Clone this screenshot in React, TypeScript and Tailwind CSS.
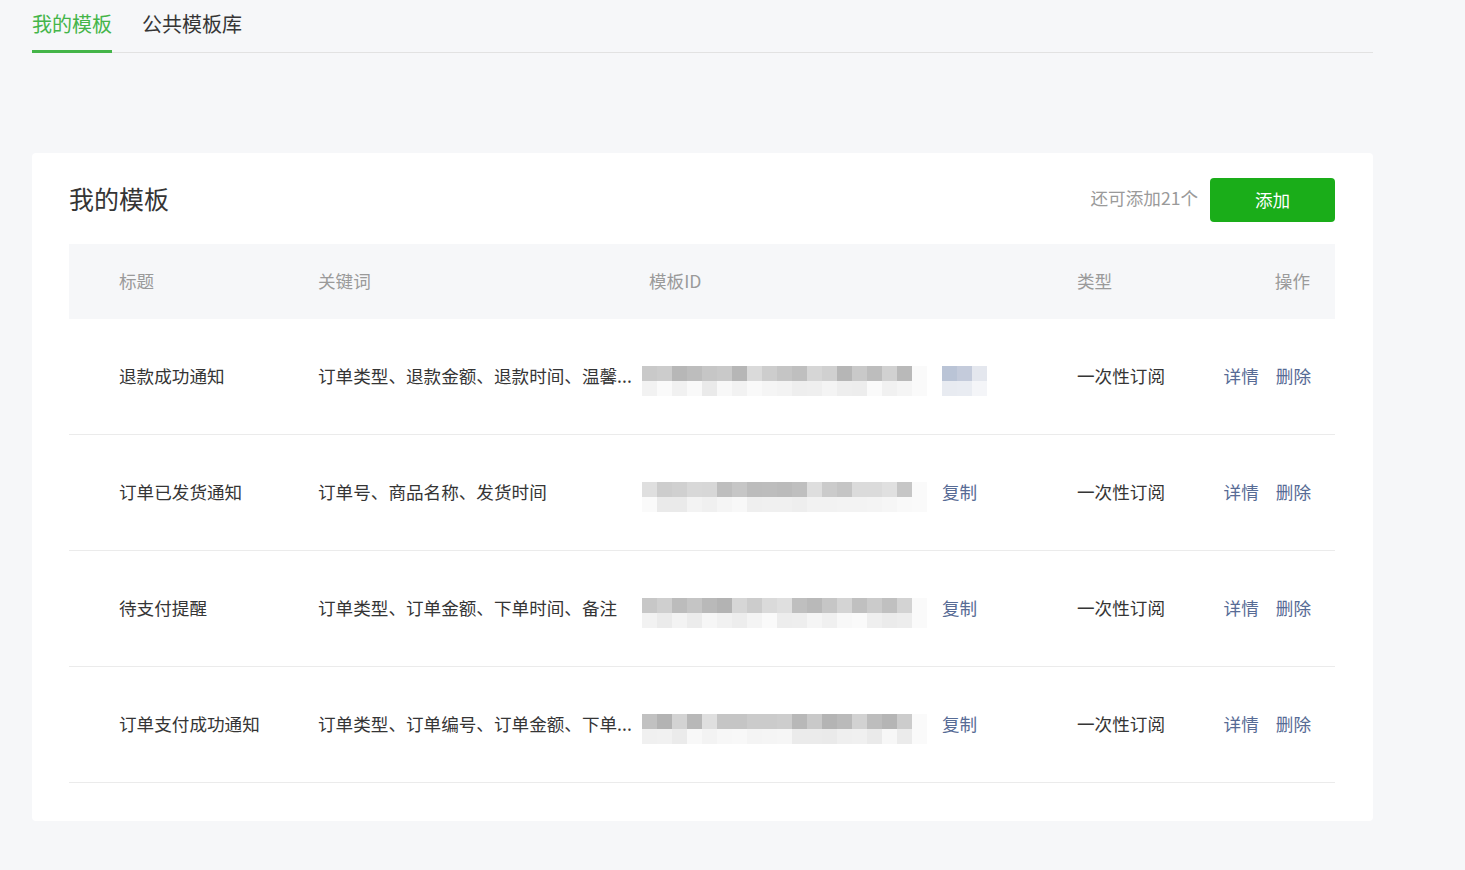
import React from 'react';

type Row = {
  title: string;
  keywords: string;
  seed: number;
  copied: boolean;
};

const rows: Row[] = [
  { title: '退款成功通知', keywords: '订单类型、退款金额、退款时间、温馨...', seed: 7, copied: false },
  { title: '订单已发货通知', keywords: '订单号、商品名称、发货时间', seed: 19, copied: true },
  { title: '待支付提醒', keywords: '订单类型、订单金额、下单时间、备注', seed: 31, copied: true },
  { title: '订单支付成功通知', keywords: '订单类型、订单编号、订单金额、下单...', seed: 53, copied: true },
];

// simple seeded random, so the blurred id looks the same every render
function randoms(seed: number, n: number) {
  let s = seed;
  const out: number[] = [];
  for (let i = 0; i < n; i++) {
    s = (s * 9301 + 49297) % 233280;
    out.push(s / 233280);
  }
  return out;
}

function gray(v: number) {
  const h = Math.round(v).toString(16).padStart(2, '0');
  return `#${h}${h}${h}`;
}

// mosaic that stands in for the masked template id
function BlurredId({ seed, withBlue }: { seed: number; withBlue: boolean }) {
  const cols = 18;
  const top = randoms(seed, cols);
  const bottom = randoms(seed + 101, cols);
  return (
    <svg width={withBlue ? 345 : 285} height={30} className="mt-[8px] shrink-0">
      {top.map((r, i) => (
        <rect key={'t' + i} x={i * 15} y={0} width={15} height={15} fill={gray(178 + r * 46)} />
      ))}
      {bottom.map((r, i) => (
        <rect key={'b' + i} x={i * 15} y={15} width={15} height={15} fill={gray(234 + r * 16)} />
      ))}
      <rect x={270} y={0} width={15} height={30} fill="#fafafa" />
      {withBlue && (
        <g>
          <rect x={300} y={0} width={15} height={15} fill="#bac4d6" />
          <rect x={315} y={0} width={15} height={15} fill="#c4cbdb" />
          <rect x={330} y={0} width={15} height={15} fill="#e4e7ee" />
          <rect x={300} y={15} width={15} height={15} fill="#e8ebf1" />
          <rect x={315} y={15} width={15} height={15} fill="#e9ecf2" />
          <rect x={330} y={15} width={15} height={15} fill="#f4f5f8" />
        </g>
      )}
    </svg>
  );
}

export default function App() {
  const [tab, setTab] = React.useState<'mine' | 'public'>('mine');

  return (
    <div className="min-h-screen bg-[#f6f7f9] font-['Noto_Sans_CJK_SC',sans-serif] text-[#353535]">
      <div className="pl-[32px] w-[1373px]">
        {/* tabs */}
        <div className="flex gap-[30px] h-[53px] border-b border-[#e2e2e2]">
          <div
            onClick={() => setTab('mine')}
            className={
              tab === 'mine'
                ? 'h-[53px] -mb-px flex items-center pb-[3px] border-b-[3px] border-[#44b549] text-[#44b549] text-[20px] cursor-pointer'
                : 'h-[53px] -mb-px flex items-center pb-[3px] border-b-[3px] border-transparent text-[20px] cursor-pointer'
            }
          >
            我的模板
          </div>
          <div
            onClick={() => setTab('public')}
            className={
              tab === 'public'
                ? 'h-[53px] -mb-px flex items-center pb-[3px] border-b-[3px] border-[#44b549] text-[#44b549] text-[20px] cursor-pointer'
                : 'h-[53px] -mb-px flex items-center pb-[3px] border-b-[3px] border-transparent text-[20px] cursor-pointer'
            }
          >
            公共模板库
          </div>
        </div>

        {/* card */}
        <div className="mt-[100px] bg-white rounded-[4px] pl-[37px] pr-[38px] pt-[25px] pb-[38px]">
          <div className="flex items-center justify-between h-[44px]">
            <h2 className="text-[25px] leading-none -mt-[4px]">我的模板</h2>
            <div className="flex items-center">
              <span className="text-[17.6px] text-[#9a9a9a] mr-[12px] -mt-[4px]">还可添加21个</span>
              <button className="w-[125px] h-[44px] rounded-[4px] bg-[#1aad19] text-white text-[17.6px]">
                添加
              </button>
            </div>
          </div>

          <div className="mt-[22px]">
            <div className="grid grid-cols-[249px_324px_435px_146px_1fr] items-center h-[75px] bg-[#f6f7f9] text-[17.6px] text-[#9a9a9a]">
              <div className="pl-[50px]">标题</div>
              <div>关键词</div>
              <div className="pl-[7px]">模板ID</div>
              <div>类型</div>
              <div className="text-right pr-[25px]">操作</div>
            </div>

            {rows.map((r) => (
              <div
                key={r.title}
                className="grid grid-cols-[249px_324px_435px_146px_1fr] items-center h-[116px] border-b border-[#ebebeb] text-[17.6px]"
              >
                <div className="pl-[50px]">{r.title}</div>
                <div className="pr-[8px] whitespace-nowrap overflow-hidden">{r.keywords}</div>
                <div className="flex items-center">
                  <BlurredId seed={r.seed} withBlue={!r.copied} />
                  {r.copied && <span className="ml-[15px] text-[#576b95] cursor-pointer">复制</span>}
                </div>
                <div>一次性订阅</div>
                <div className="flex justify-end gap-[17px] pr-[24px] text-[#576b95]">
                  <span className="cursor-pointer">详情</span>
                  <span className="cursor-pointer">删除</span>
                </div>
              </div>
            ))}
          </div>
        </div>
      </div>
    </div>
  );
}
